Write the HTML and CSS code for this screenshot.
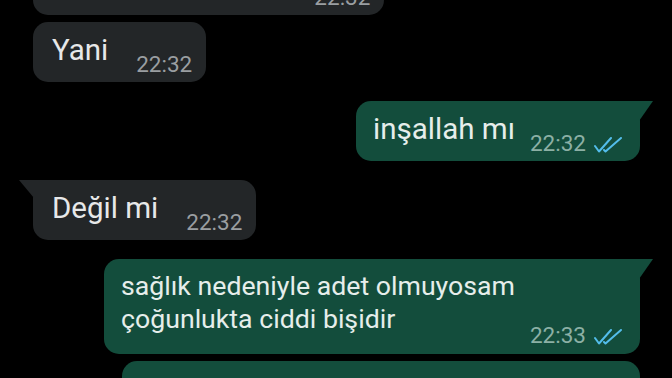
FILE: index.html
```html
<!DOCTYPE html>
<html>
<head>
    <meta charset="UTF-8">
    <title>Sohbet</title>
    <link rel="stylesheet" href="styles.css">
</head>
<body>
<div class="chat">
    <div class="msg in">
        <div class="bubble">
            <div class="text">Çok düzenliydi ya.</div>
            <div class="meta"><span class="time">22:32</span></div>
        </div>
    </div>
    <div class="msg in">
        <div class="bubble">
            <div class="text">Yani</div>
            <div class="meta"><span class="time">22:32</span></div>
        </div>
    </div>
    <div class="msg out first">
        <div class="bubble">
            <div class="text">inşallah mı</div>
            <div class="meta">
                <span class="time">22:32</span>
                <svg class="tick" viewBox="0 0 28 16" width="28" height="16"><path d="M1 9 L5 14.5 L17 1 M10 13 L11.5 14.5 L27 1"/></svg>
            </div>
        </div>
    </div>
    <div class="msg in first">
        <div class="bubble">
            <div class="text">Değil mi</div>
            <div class="meta"><span class="time">22:32</span></div>
        </div>
    </div>
    <div class="msg out first">
        <div class="bubble long">
            <div class="text">sağlık nedeniyle adet olmuyosam<br>çoğunlukta ciddi bişidir</div>
            <div class="meta">
                <span class="time">22:33</span>
                <svg class="tick" viewBox="0 0 28 16" width="28" height="16"><path d="M1 9 L5 14.5 L17 1 M10 13 L11.5 14.5 L27 1"/></svg>
            </div>
        </div>
    </div>
    <div class="msg out">
        <div class="bubble long next">
            <div class="text">yani bi doktora görünsen iyi olur<br>merak etme</div>
            <div class="meta">
                <span class="time">22:33</span>
                <svg class="tick" viewBox="0 0 28 16" width="28" height="16"><path d="M1 9 L5 14.5 L17 1 M10 13 L11.5 14.5 L27 1"/></svg>
            </div>
        </div>
    </div>
</div>
</body>
</html>
```

FILE: styles.css
```css
*{ margin:0; padding:0; box-sizing:border-box;}
html, body{ background:#000; overflow:hidden;}
body{
    width: 672px;
    height: 378px;
    font-family: Roboto, "Noto Sans", sans-serif;
}
.chat{
    display: flex;
    flex-direction: column;
    gap: 7px;
    padding: 0 32px 0 33px;
    margin-top: -45px;
}
.msg{
    display: flex;
}
.msg.first{
    margin-top: 12px;
}
.msg.out{
    justify-content: flex-end;
}
.bubble{
    position: relative;
    display: flex;
    align-items: flex-end;
    padding: 10px 14px 6px 19px;
    border-radius: 15px;
    background: #232628;
    color: #e7e8e9;
}
.text{
    font-size: 29.5px;
    line-height: 36px;
    margin-bottom: 8px;
    white-space: nowrap;
}
.meta{
    display: flex;
    align-items: center;
    gap: 8px;
    margin-left: 28px;
}
.time{
    font-size: 22.5px;
    line-height: 24px;
    color: #9a9ea1;
}
.out .bubble{
    background: #134d3c;
    color: #e6eeeb;
    padding: 10px 18px 6px 17px;
}
.out .meta{
    margin-left: 15px;
}
.out .time{
    color: #8cb0a5;
}
.out .bubble.long{
    padding: 11px 18px 7px 17px;
}
.out .bubble.next{
    padding-top: 20px;
}
.long .text{
    font-size: 26.7px;
    line-height: 33px;
    margin-bottom: 11px;
}
.tick{
    margin-top: 3px;
    fill: none;
    stroke: #53bdeb;
    stroke-width: 2;
    stroke-linecap: round;
    stroke-linejoin: round;
}

/* kuyruklar */
.in.first .bubble{
    border-top-left-radius: 0;
}
.in.first .bubble::before{
    content: "";
    position: absolute;
    top: 0;
    left: -14px;
    width: 15px;
    height: 18px;
    background: #232628;
    clip-path: polygon(0 0, 100% 0, 100% 100%);
}
.out.first .bubble{
    border-top-right-radius: 0;
}
.out.first .bubble::after{
    content: "";
    position: absolute;
    top: 0;
    right: -13px;
    width: 14px;
    height: 20px;
    background: #134d3c;
    clip-path: polygon(0 0, 100% 0, 0 100%);
}
```
